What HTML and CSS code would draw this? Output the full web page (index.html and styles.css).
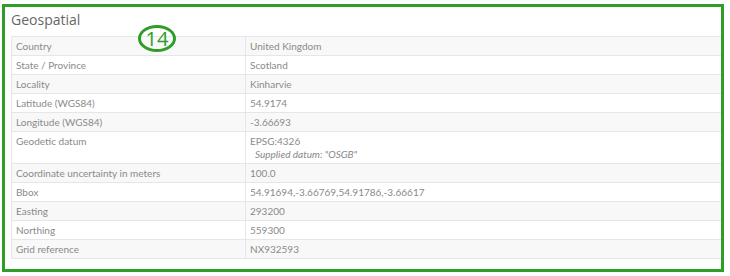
FILE: index.html
```html
<!DOCTYPE html>
<html>
<head>
<meta charset="utf-8">
<link rel="stylesheet" href="styles.css">
</head>
<body>
<div class="frame">
  <div class="panel">
    <h2 class="panel-title">Geospatial</h2>
    <table class="props">
      <tr class="odd"><td class="key">Country</td><td>United Kingdom</td></tr>
      <tr><td class="key">State / Province</td><td>Scotland</td></tr>
      <tr class="odd"><td class="key">Locality</td><td>Kinharvie</td></tr>
      <tr><td class="key">Latitude (WGS84)</td><td>54.9174</td></tr>
      <tr class="odd"><td class="key">Longitude (WGS84)</td><td>-3.66693</td></tr>
      <tr><td class="key">Geodetic datum</td><td>EPSG:4326<div class="note">Supplied datum: "OSGB"</div></td></tr>
      <tr class="odd"><td class="key">Coordinate uncertainty in meters</td><td>100.0</td></tr>
      <tr><td class="key">Bbox</td><td>54.91694,-3.66769,54.91786,-3.66617</td></tr>
      <tr class="odd"><td class="key">Easting</td><td>293200</td></tr>
      <tr><td class="key">Northing</td><td>559300</td></tr>
      <tr class="odd"><td class="key">Grid reference</td><td>NX932593</td></tr>
    </table>
  </div>
  <div class="badge">14</div>
</div>
</body>
</html>
```
FILE: styles.css
```css
html, body {
  margin: 0;
  padding: 0;
  background: #fff;
}
body {
  font-family: Lato, "Liberation Sans", sans-serif;
}
.frame {
  position: relative;
  margin: 4px 0 0 2px;
  width: 716px;
  height: 262px;
  border: 3px solid #2f9d27;
  overflow: hidden;
}
.panel {
  padding: 0 0 0 6px;
}
.panel-title {
  margin: 0;
  height: 29px;
  box-sizing: border-box;
  padding: 4px 0 0 0;
  font-size: 14px;
  line-height: 18px;
  font-weight: normal;
  color: #666;
  font-family: "Open Sans", Lato, sans-serif;
}
.props {
  width: 720px;
  border-collapse: collapse;
  font-size: 10px;
  color: #8a8a8a;
}
.props td {
  border: 1px solid #e6e6e6;
  padding: 2px 4px 2px 4px;
  line-height: 14px;
  vertical-align: top;
}
.props td.key {
  width: 225px;
}
.props tr.odd td {
  background: #f8f8f8;
}
.note {
  font-style: italic;
  padding-left: 5px;
  line-height: 12px;
  padding-bottom: 1px;
  color: #888;
}
.badge {
  position: absolute;
  left: 133px;
  top: 18px;
  width: 32px;
  height: 21px;
  border: 3px solid #2f9d27;
  border-radius: 50%;
  color: #2f9d27;
  font-family: "Open Sans", sans-serif;
  font-size: 20px;
  line-height: 21px;
  text-align: center;
  background: transparent;
}
```
